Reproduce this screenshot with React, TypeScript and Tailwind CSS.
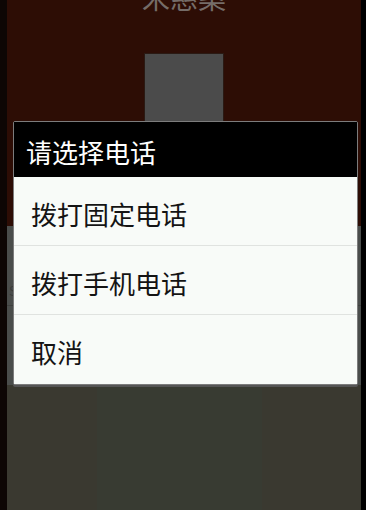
const cjk = { fontFamily: '"Noto Sans CJK SC", "Noto Sans", sans-serif' }

const options = ['拨打固定电话', '拨打手机电话', '取消']

function Backdrop() {
  return (
    <div className="flex h-full w-full bg-black">
      <div className="w-[7px] shrink-0 bg-[#0d0604]" />
      <div className="flex flex-1 flex-col">
        <div className="flex h-[226px] flex-col items-center overflow-hidden bg-[#2d0d05]">
          <div className="-mt-[19px] text-[28px] leading-[32px] text-[#756c68]" style={cjk}>
            宋慈案
          </div>
          <div className="mt-[40px] h-[80px] w-[80px] border border-[#2a1a14] bg-[#4b4b4b]" />
        </div>
        <div className="flex h-[159px] flex-col bg-[#4a4d4b]">
          <div className="flex h-[79px] items-end pb-[8px] pl-[2px]">
            <span className="text-[13px] leading-none text-[#3a3c3a]" style={cjk}>S</span>
          </div>
          <div className="h-px bg-[#3e403e]" />
        </div>
        <div className="flex flex-1">
          <div className="w-[90px] bg-[#3a3930]" />
          <div className="w-[165px] bg-[#383b32]" />
          <div className="flex-1 bg-[#3a3930]" />
        </div>
      </div>
      <div className="w-[5px] shrink-0 bg-black" />
    </div>
  )
}

export default function App() {
  return (
    <div className="relative h-[510px] w-[366px] overflow-hidden" style={cjk}>
      <Backdrop />
      <div className="absolute left-[13px] top-[121px] w-[345px] rounded-[2px] border border-[#7c7c7c] shadow-[0_2px_0_#555]">
        <div className="flex h-[55px] items-center bg-black pl-[12px] pt-[4px] text-[26px] text-white">
          请选择电话
        </div>
        {options.map((o, i) => (
          <div
            key={o}
            className={`flex h-[69px] items-center bg-[#f8fbf8] pl-[17px] pt-[4px] text-[26px] text-[#141414] ${
              i < options.length - 1 ? 'border-b border-[#e0e3e0]' : ''
            }`}
          >
            {o}
          </div>
        ))}
      </div>
    </div>
  )
}
